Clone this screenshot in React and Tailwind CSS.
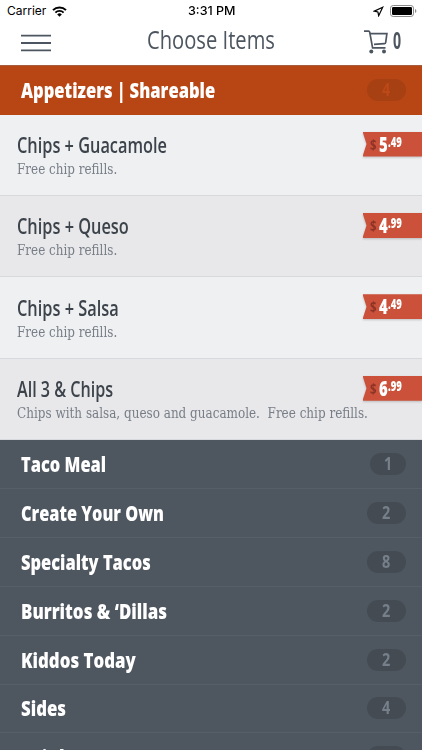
import { useLayoutEffect, useRef, useState } from "react";
import { clsx } from "clsx";

const items = [
  { name: "Chips + Guacamole", nameWidth: 150, note: "Free chip refills.", noteWidth: 100, dollars: "5", cents: ".49" },
  { name: "Chips + Queso", nameWidth: 112, note: "Free chip refills.", noteWidth: 100, dollars: "4", cents: ".99" },
  { name: "Chips + Salsa", nameWidth: 102, note: "Free chip refills.", noteWidth: 100, dollars: "4", cents: ".49" },
  {
    name: "All 3 & Chips",
    nameWidth: 96,
    note: "Chips with salsa, queso and guacamole.\u00a0 Free chip refills.",
    noteWidth: 351,
    dollars: "6",
    cents: ".99",
  },
];

const categories = [
  { name: "Taco Meal", width: 85, count: 1 },
  { name: "Create Your Own", width: 143, count: 2 },
  { name: "Specialty Tacos", width: 130, count: 8 },
  { name: "Burritos & ‘Dillas", width: 146, count: 2 },
  { name: "Kiddos Today", width: 115, count: 2 },
  { name: "Sides", width: 45, count: 4 },
  { name: "Drinks", width: 58, count: 8 },
];

const Condensed = ({ width, className, children }) => {
  const ref = useRef(null);
  const [scale, setScale] = useState(1);

  useLayoutEffect(() => {
    setScale(width / ref.current.offsetWidth);
  }, [width, children]);

  return (
    <span className="block" style={{ width }}>
      <span
        ref={ref}
        className={clsx("inline-block align-top whitespace-nowrap origin-left", className)}
        style={{ transform: `scaleX(${scale})` }}
      >
        {children}
      </span>
    </span>
  );
};

const StatusBar = () => (
  <div className="h-[22px] shrink-0 px-[7px] flex items-center justify-between text-black font-['Inter',sans-serif] text-[12px] leading-[22px]">
    <div className="flex items-center gap-[6px] w-[120px]">
      <Condensed width={39}>Carrier</Condensed>
      <svg width="15" height="11" viewBox="0 0 15 11" fill="none" stroke="currentColor">
        <path d="M1 4.1a9.2 9.2 0 0 1 13 0" strokeWidth="2" />
        <path d="M3.4 6.6a5.8 5.8 0 0 1 8.2 0" strokeWidth="1.9" />
        <path d="M7.5 10.7 5.2 8.4a3.3 3.3 0 0 1 4.6 0z" fill="currentColor" stroke="none" />
      </svg>
    </div>
    <Condensed width={48} className="font-medium">3:31 PM</Condensed>
    <div className="flex items-center justify-end gap-[6px] w-[120px] -mr-[2px]">
      <svg width="11" height="11" viewBox="0 0 11 11" fill="none" stroke="currentColor" strokeWidth="1.2" strokeLinejoin="miter">
        <path d="M9.7 1.2 1.3 5.1l3.6.9.8 3.7z" />
      </svg>
      <svg width="27" height="12" viewBox="0 0 27 12">
        <rect x="0.5" y="0.5" width="23" height="11" rx="2.7" fill="none" stroke="#8a8a8a" />
        <rect x="2" y="2" width="20" height="8" rx="1.3" fill="#000" />
        <path d="M25 4v4q1.4-.6 1.4-2T25 4z" fill="#8a8a8a" />
      </svg>
    </div>
  </div>
);

const NavBar = () => (
  <div className="h-[43px] shrink-0 pl-[21px] pr-[21px] flex items-start justify-between text-[#4d5660] font-['Open_Sans',sans-serif]">
    <svg className="mt-[12px] mr-[96px]" width="30" height="18" viewBox="0 0 30 18" stroke="currentColor" strokeWidth="1.9">
      <path d="M0 1.6h30M0 9h30M0 16.4h30" />
    </svg>
    <Condensed width={128} className="text-[26px] leading-[35px]">Choose Items</Condensed>
    <div className="w-[126px] pt-[7px] flex justify-end gap-[5px]">
      <svg className="mt-px" width="24" height="24" viewBox="0 0 24 24" fill="none" stroke="currentColor" strokeWidth="1.7">
        <path d="M0 1.2h4.5q1 0 1.2 1L8.6 17.8H21.5" />
        <path d="M6 3.6h16.9l-1.2 8.8q-.2 1.2-1.4 1.3L10 14.4" />
        <circle cx="7.3" cy="21.6" r="2" fill="currentColor" stroke="none" />
        <circle cx="20" cy="21.6" r="2" fill="currentColor" stroke="none" />
      </svg>
      <Condensed width={8} className="text-[23px] leading-[23px] font-bold">0</Condensed>
    </div>
  </div>
);

const CategoryRow = ({ name, width, count, active }) => (
  <div
    className={clsx(
      "shrink-0 pl-[21px] pr-[16px] flex items-center justify-between text-white font-['Open_Sans',sans-serif]",
      active ? "h-[49.5px] bg-[#b84614] border-t border-[#a65c3d]" : "h-[48.9px] bg-[#4e565f] border-b border-[#565e67]"
    )}
  >
    <Condensed width={width} className="text-[20.5px] leading-[28px] font-extrabold">{name}</Condensed>
    <div
      className={clsx(
        "h-[22px] rounded-full flex items-center justify-center",
        count === 1 ? "w-[36px]" : "w-[39px]",
        active ? "bg-[#a74012] text-[#bd4918]" : "bg-[#444b53] text-[#77808a]"
      )}
    >
      <Condensed width={8.5} className="text-[17px] leading-[24px] font-bold">{count}</Condensed>
    </div>
  </div>
);

const PriceTag = ({ dollars, cents }) => (
  <div className="mt-[17px] w-[59.5px] h-[25px] shrink-0 drop-shadow-[0_1px_1px_rgba(0,0,0,0.2)]">
    <div className="h-full pl-[7.5px] flex items-start bg-[#cb513a] text-white font-['Open_Sans',sans-serif] font-bold [clip-path:polygon(0_0,100%_0,100%_100%,0_100%,4px_50%)]">
      <Condensed width={6.5} className="text-[14px] leading-[25px] text-[#8d3426]">$</Condensed>
      <div className="w-[2.5px]" />
      <Condensed width={8.5} className="text-[21px] leading-[25px] font-extrabold">{dollars}</Condensed>
      <Condensed width={14} className="text-[13.5px] leading-[20px] font-extrabold">{cents}</Condensed>
    </div>
  </div>
);

const MenuItem = ({ item, shaded }) => (
  <div
    className={clsx(
      "h-[81.4px] shrink-0 pl-[17px] flex justify-between border-b border-[#d8d9dc]",
      shaded ? "bg-[#e8e8ea]" : "bg-[#eff0f2]"
    )}
  >
    <div className="pt-[16.5px] w-0">
      <Condensed width={item.nameWidth} className="text-[21px] leading-[28px] font-['Open_Sans',sans-serif] font-semibold text-[#3c434b]">
        {item.name}
      </Condensed>
      <Condensed width={item.noteWidth} className="text-[14.5px] leading-[20px] font-['DejaVu_Serif',serif] text-[#777e87]">
        {item.note}
      </Condensed>
    </div>
    <PriceTag dollars={item.dollars} cents={item.cents} />
  </div>
);

export default function App() {
  return (
    <div className="w-[422px] h-[750px] overflow-hidden flex flex-col bg-white">
      <StatusBar />
      <NavBar />
      <CategoryRow name="Appetizers | Shareable" width={194} count={4} active />
      {items.map((item, i) => (
        <MenuItem key={item.name} item={item} shaded={i % 2 === 1} />
      ))}
      {categories.map((category) => (
        <CategoryRow key={category.name} {...category} />
      ))}
    </div>
  );
}
